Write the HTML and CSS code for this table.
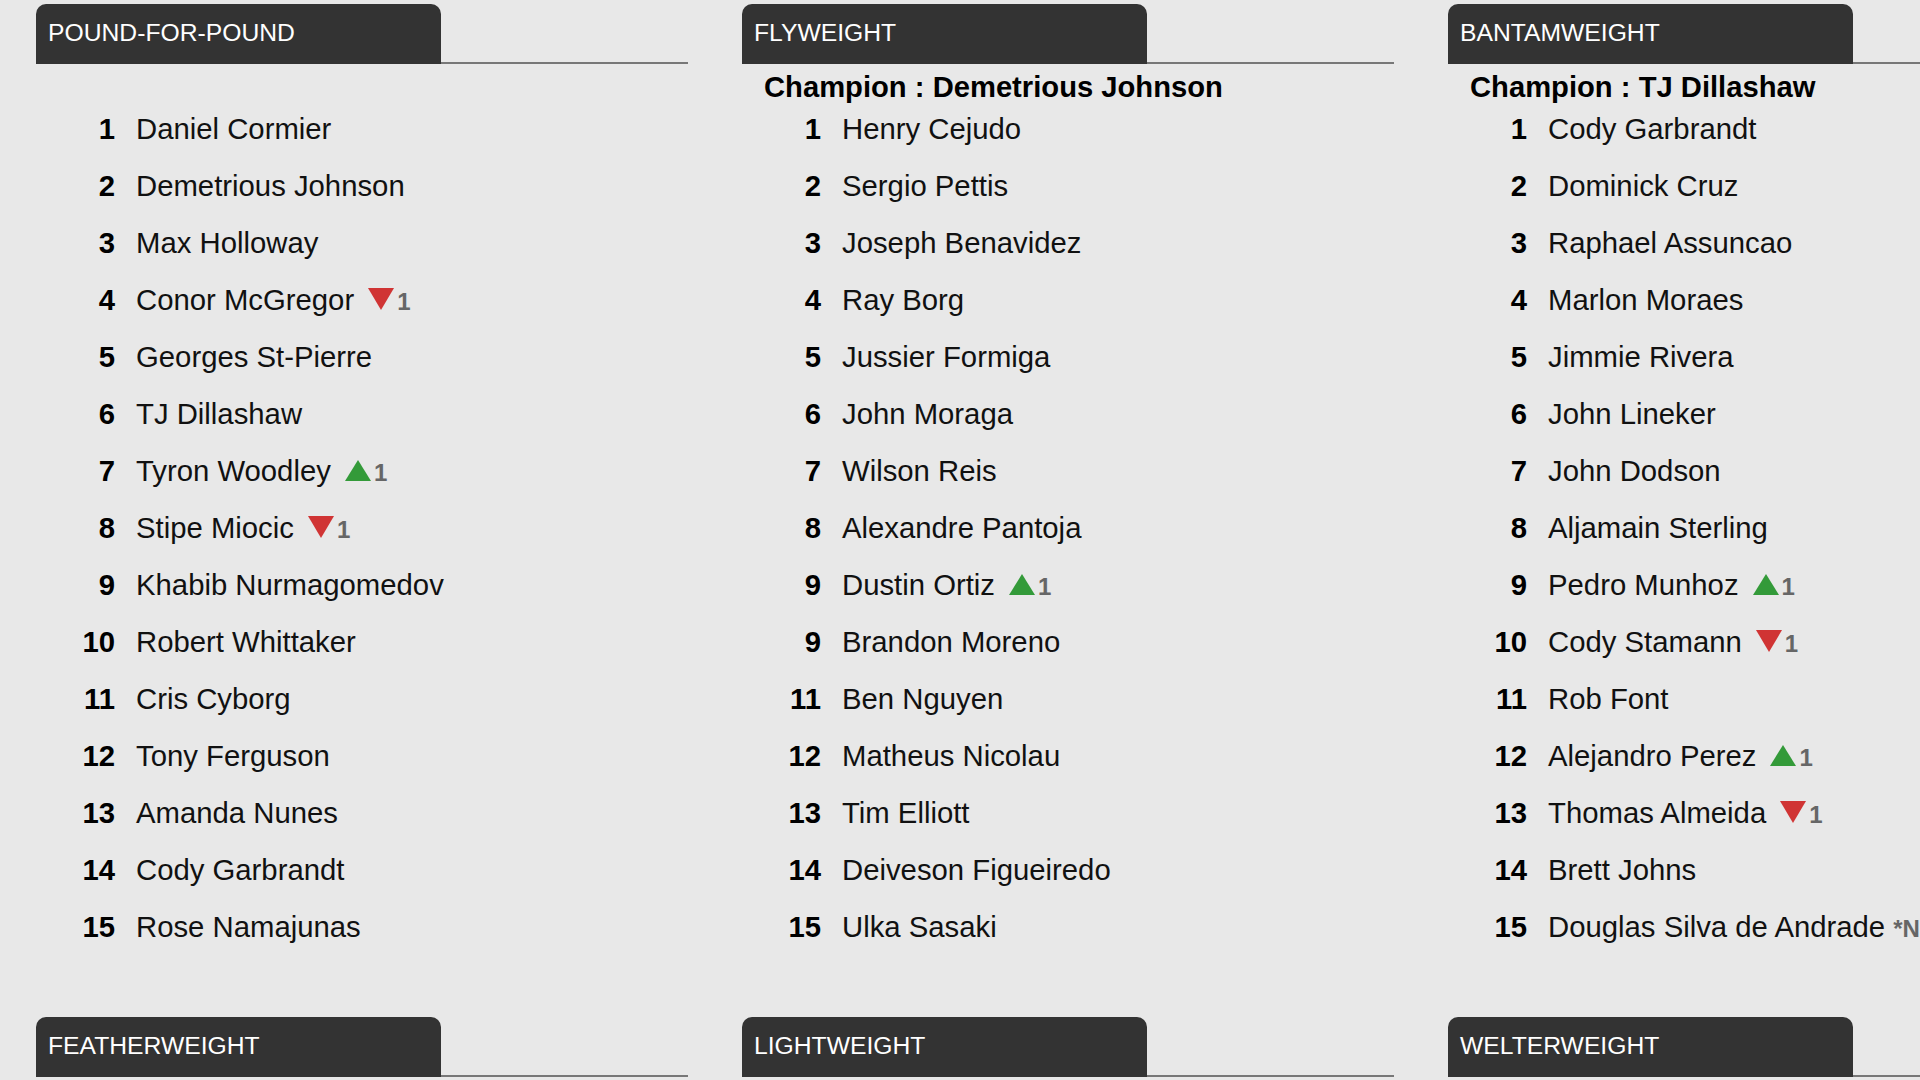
FILE: index.html
```html
<!DOCTYPE html>
<html lang="en">
<head>
<meta charset="utf-8">
<title>UFC Rankings</title>
<link rel="stylesheet" href="styles.css">
</head>
<body>
<main class="board">
  <section class="division">
    <div class="tabbar"><h2 class="tab">POUND-FOR-POUND</h2></div>
    <div class="champion"></div>
    <ol class="ranks">
      <li><span class="rank">1</span><span class="name">Daniel Cormier</span></li>
      <li><span class="rank">2</span><span class="name">Demetrious Johnson</span></li>
      <li><span class="rank">3</span><span class="name">Max Holloway</span></li>
      <li><span class="rank">4</span><span class="name">Conor McGregor</span><span class="move down"><i class="tri"></i>1</span></li>
      <li><span class="rank">5</span><span class="name">Georges St-Pierre</span></li>
      <li><span class="rank">6</span><span class="name">TJ Dillashaw</span></li>
      <li><span class="rank">7</span><span class="name">Tyron Woodley</span><span class="move up"><i class="tri"></i>1</span></li>
      <li><span class="rank">8</span><span class="name">Stipe Miocic</span><span class="move down"><i class="tri"></i>1</span></li>
      <li><span class="rank">9</span><span class="name">Khabib Nurmagomedov</span></li>
      <li><span class="rank">10</span><span class="name">Robert Whittaker</span></li>
      <li><span class="rank">11</span><span class="name">Cris Cyborg</span></li>
      <li><span class="rank">12</span><span class="name">Tony Ferguson</span></li>
      <li><span class="rank">13</span><span class="name">Amanda Nunes</span></li>
      <li><span class="rank">14</span><span class="name">Cody Garbrandt</span></li>
      <li><span class="rank">15</span><span class="name">Rose Namajunas</span></li>
    </ol>
  </section>

  <section class="division">
    <div class="tabbar"><h2 class="tab">FLYWEIGHT</h2></div>
    <div class="champion">Champion : Demetrious Johnson</div>
    <ol class="ranks">
      <li><span class="rank">1</span><span class="name">Henry Cejudo</span></li>
      <li><span class="rank">2</span><span class="name">Sergio Pettis</span></li>
      <li><span class="rank">3</span><span class="name">Joseph Benavidez</span></li>
      <li><span class="rank">4</span><span class="name">Ray Borg</span></li>
      <li><span class="rank">5</span><span class="name">Jussier Formiga</span></li>
      <li><span class="rank">6</span><span class="name">John Moraga</span></li>
      <li><span class="rank">7</span><span class="name">Wilson Reis</span></li>
      <li><span class="rank">8</span><span class="name">Alexandre Pantoja</span></li>
      <li><span class="rank">9</span><span class="name">Dustin Ortiz</span><span class="move up"><i class="tri"></i>1</span></li>
      <li><span class="rank">9</span><span class="name">Brandon Moreno</span></li>
      <li><span class="rank">11</span><span class="name">Ben Nguyen</span></li>
      <li><span class="rank">12</span><span class="name">Matheus Nicolau</span></li>
      <li><span class="rank">13</span><span class="name">Tim Elliott</span></li>
      <li><span class="rank">14</span><span class="name">Deiveson Figueiredo</span></li>
      <li><span class="rank">15</span><span class="name">Ulka Sasaki</span></li>
    </ol>
  </section>

  <section class="division">
    <div class="tabbar"><h2 class="tab">BANTAMWEIGHT</h2></div>
    <div class="champion">Champion : TJ Dillashaw</div>
    <ol class="ranks">
      <li><span class="rank">1</span><span class="name">Cody Garbrandt</span></li>
      <li><span class="rank">2</span><span class="name">Dominick Cruz</span></li>
      <li><span class="rank">3</span><span class="name">Raphael Assuncao</span></li>
      <li><span class="rank">4</span><span class="name">Marlon Moraes</span></li>
      <li><span class="rank">5</span><span class="name">Jimmie Rivera</span></li>
      <li><span class="rank">6</span><span class="name">John Lineker</span></li>
      <li><span class="rank">7</span><span class="name">John Dodson</span></li>
      <li><span class="rank">8</span><span class="name">Aljamain Sterling</span></li>
      <li><span class="rank">9</span><span class="name">Pedro Munhoz</span><span class="move up"><i class="tri"></i>1</span></li>
      <li><span class="rank">10</span><span class="name">Cody Stamann</span><span class="move down"><i class="tri"></i>1</span></li>
      <li><span class="rank">11</span><span class="name">Rob Font</span></li>
      <li><span class="rank">12</span><span class="name">Alejandro Perez</span><span class="move up"><i class="tri"></i>1</span></li>
      <li><span class="rank">13</span><span class="name">Thomas Almeida</span><span class="move down"><i class="tri"></i>1</span></li>
      <li><span class="rank">14</span><span class="name">Brett Johns</span></li>
      <li><span class="rank">15</span><span class="name">Douglas Silva de Andrade</span><span class="note">*NR</span></li>
    </ol>
  </section>

  <section class="division">
    <div class="tabbar"><h2 class="tab">FEATHERWEIGHT</h2></div>
  </section>
  <section class="division">
    <div class="tabbar"><h2 class="tab">LIGHTWEIGHT</h2></div>
  </section>
  <section class="division">
    <div class="tabbar"><h2 class="tab">WELTERWEIGHT</h2></div>
  </section>
</main>
</body>
</html>
```

FILE: styles.css
```css
html, body {
  overflow: hidden;
}
body {
  margin: 0;
  padding: 4px 0 0 36px;
  background: #e8e8e8;
  font-family: "Liberation Sans", Arial, sans-serif;
  color: #111;
}
.board {
  display: grid;
  grid-template-columns: repeat(3, 652px);
  column-gap: 54px;
  row-gap: 62px;
  align-items: start;
}
.division {
  min-width: 0;
}
.tabbar {
  display: flex;
  border-bottom: 2px solid #777;
}
.tab {
  margin: 0 0 -2px 0;
  width: 405px;
  height: 60px;
  box-sizing: border-box;
  padding-left: 12px;
  background: #333;
  border-radius: 10px 10px 0 0;
  color: #fff;
  font-size: 24.7px;
  font-weight: normal;
  line-height: 58px;
  white-space: nowrap;
}
.champion {
  height: 36px;
  box-sizing: border-box;
  padding: 10px 0 0 22px;
  font-size: 29.2px;
  font-weight: bold;
  line-height: 26px;
  color: #000;
  white-space: nowrap;
}
.ranks {
  list-style: none;
  margin: 0;
  padding: 0;
}
.ranks li {
  display: flex;
  align-items: baseline;
  height: 57px;
  line-height: 57px;
  font-size: 29.3px;
  white-space: nowrap;
}
.rank {
  flex: none;
  width: 79px;
  text-align: right;
  font-weight: bold;
  color: #000;
}
.name {
  margin-left: 21px;
  color: #111;
}
.move {
  margin-left: 14px;
  font-size: 24px;
  font-weight: bold;
  color: #666;
}
.tri {
  display: inline-block;
  width: 0;
  height: 0;
  margin-right: 3px;
  border-left: 13px solid transparent;
  border-right: 13px solid transparent;
}
.down .tri {
  border-top: 22px solid #d03434;
}
.up .tri {
  border-bottom: 21px solid #339a39;
}
.note {
  margin-left: 8px;
  font-size: 24px;
  font-weight: bold;
  color: #666;
}
```
